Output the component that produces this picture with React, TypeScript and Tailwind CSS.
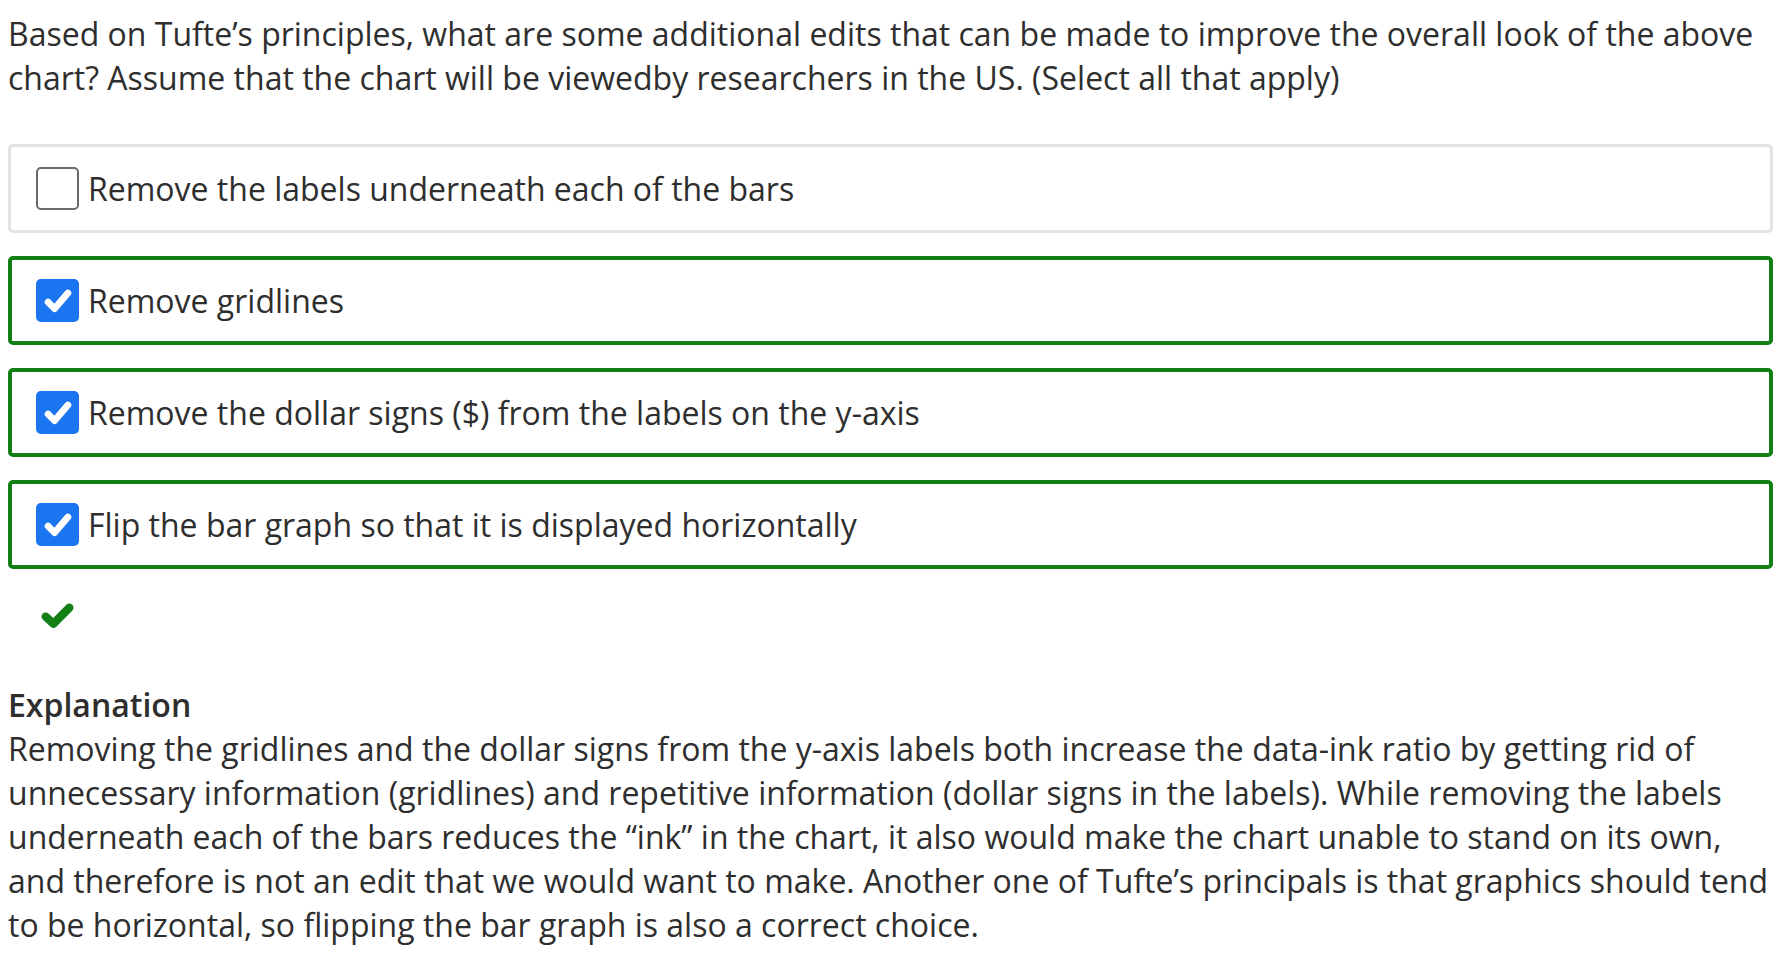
import React from 'react';

const options = [
  { label: 'Remove the labels underneath each of the bars', checked: false },
  { label: 'Remove gridlines', checked: true },
  { label: 'Remove the dollar signs ($) from the labels on the y-axis', checked: true },
  { label: 'Flip the bar graph so that it is displayed horizontally', checked: true },
];

const Box: React.FC<{ checked: boolean }> = ({ checked }) =>
  checked ? (
    <span className="flex h-[43px] w-[43px] shrink-0 items-center justify-center rounded-[5px] bg-[#1b74f0]">
      <svg viewBox="0 0 24 24" className="h-[34px] w-[34px]">
        <path d="M5 12.8 L9.6 17.4 L19 6.4" fill="none" stroke="#fff" strokeWidth="4.8" strokeLinecap="round" strokeLinejoin="round" />
      </svg>
    </span>
  ) : (
    <span className="h-[43px] w-[43px] shrink-0 rounded-[5px] border-2 border-[#6b6b6b] bg-white" />
  );

export default function App() {
  return (
    <div className="min-h-screen bg-white font-['Open_Sans',sans-serif] text-[32px] leading-[44px] text-[#2e2e2e]">
      <div className="ml-2 w-[1765px] pt-3">
        <p>
          Based on Tufte’s principles, what are some additional edits that can be made to improve the overall look of the above
          chart? Assume that the chart will be viewedby researchers in the US. (Select all that apply)
        </p>

        <div className="mt-[44px] flex flex-col gap-[23px]">
          {options.map((o) => (
            <div
              key={o.label}
              className={`flex h-[89px] items-center gap-[9px] rounded-[5px] ${
                o.checked ? 'border-4 border-[#138015] pl-[24px]' : 'border-[3px] border-[#e3e3e3] pl-[25px]'
              }`}
            >
              <Box checked={o.checked} />
              <span>{o.label}</span>
            </div>
          ))}
        </div>

        <div className="mt-[34px] pl-[33px]">
          <svg viewBox="0 0 32 25" className="h-[26px] w-[33px]">
            <path d="M4.5 13 L12 20 L27.5 4.5" fill="none" stroke="#138015" strokeWidth="8" strokeLinecap="round" strokeLinejoin="round" />
          </svg>
        </div>

        <div className="mt-[54px]">
          <p className="font-semibold">Explanation</p>
          <p>
            Removing the gridlines and the dollar signs from the y-axis labels both increase the data-ink ratio by getting rid of
            unnecessary information (gridlines) and repetitive information (dollar signs in the labels). While removing the labels
            underneath each of the bars reduces the “ink” in the chart, it also would make the chart unable to stand on its own,
            and therefore is not an edit that we would want to make. Another one of Tufte’s principals is that graphics should tend
            to be horizontal, so flipping the bar graph is also a correct choice.
          </p>
        </div>
      </div>
    </div>
  );
}
